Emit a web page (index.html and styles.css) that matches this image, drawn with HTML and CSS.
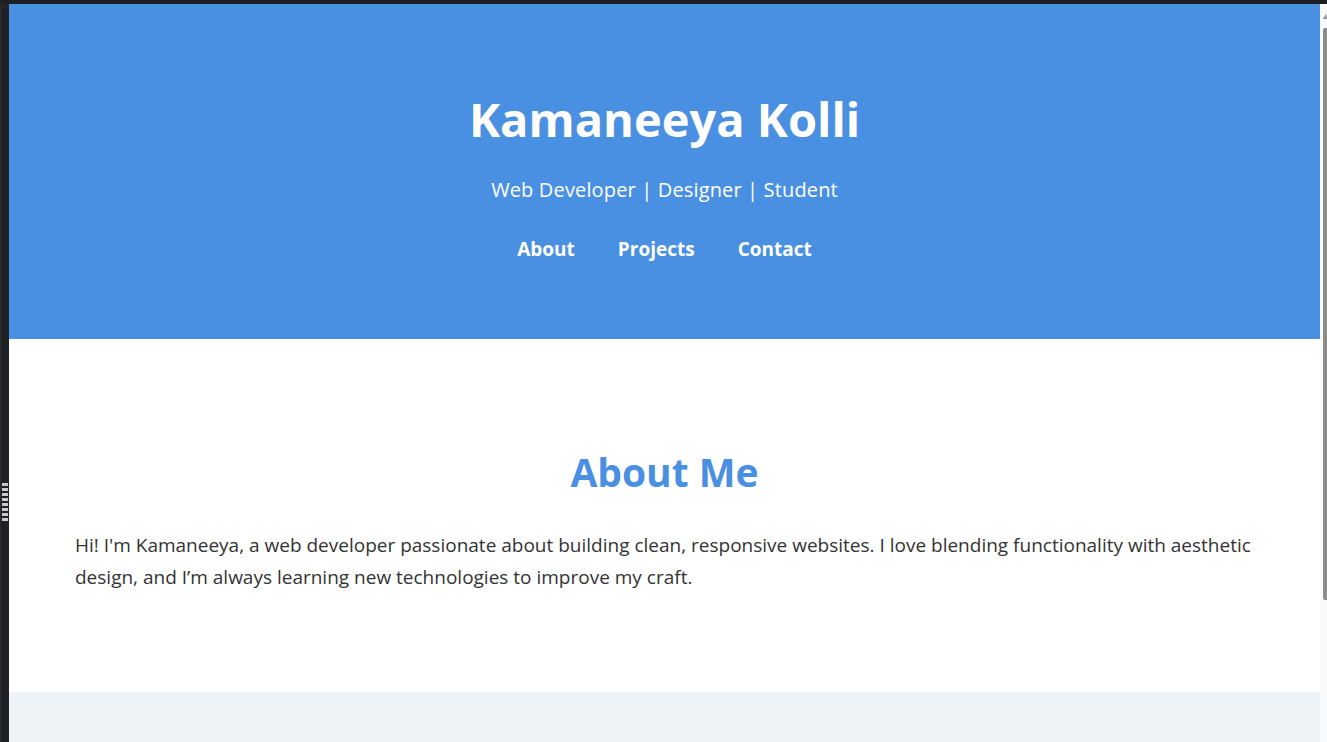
FILE: index.html
```html
<!DOCTYPE html>
<html lang="en">
<head>
<meta charset="utf-8">
<title>Kamaneeya Kolli</title>
<link rel="stylesheet" href="styles.css">
</head>
<body>
<div class="frame">
  <div class="frame-top"></div>
  <div class="frame-row">
    <div class="frame-left"><div class="grip"></div></div>
    <div class="page">
      <header class="hero">
        <h1 class="hero-title">Kamaneeya Kolli</h1>
        <p class="hero-sub">Web Developer | Designer | Student</p>
        <nav class="hero-nav">
          <a href="#about">About</a>
          <a href="#projects">Projects</a>
          <a href="#contact">Contact</a>
        </nav>
      </header>
      <section class="about" id="about">
        <h2 class="section-title">About Me</h2>
        <p class="about-text">Hi! I'm Kamaneeya, a web developer passionate about building clean, responsive websites. I love blending functionality with aesthetic design, and I’m always learning new technologies to improve my craft.</p>
      </section>
      <section class="projects" id="projects"></section>
    </div>
    <div class="scrollbar">
      <div class="scroll-arrow"></div>
      <div class="scroll-thumb"></div>
    </div>
  </div>
</div>
</body>
</html>
```

FILE: styles.css
```css
html, body {
  margin: 0;
  padding: 0;
  height: 100%;
  overflow: hidden;
}
body {
  background: #1f2024;
  font-family: "Open Sans", "Noto Sans", sans-serif;
  color: #333;
}
.frame {
  display: flex;
  flex-direction: column;
  height: 742px;
}
.frame-top {
  height: 4px;
  background: #1e1f22;
  flex: none;
}
.frame-row {
  flex: 1;
  display: flex;
  min-height: 0;
}
.frame-left {
  width: 9px;
  flex: none;
  background: #202227;
  border-left: 1px solid #2b2d31;
  box-sizing: border-box;
  display: flex;
  flex-direction: column;
}
.grip {
  margin-top: 479px;
  margin-left: 1px;
  width: 6px;
  height: 40px;
  background: repeating-linear-gradient(to bottom, #c9cacc 0 3px, #202227 3px 5px);
  -webkit-mask: repeating-linear-gradient(to right, #000 0 3px, transparent 3px 3.4px);
}
.page {
  flex: 1;
  min-width: 0;
  background: #fff;
  overflow: hidden;
}
.scrollbar {
  width: 7px;
  flex: none;
  background: #fafafa;
  display: flex;
  flex-direction: column;
  align-items: flex-end;
}
.scroll-arrow {
  margin-top: 10px;
  width: 0;
  height: 0;
  border-left: 3px solid transparent;
  border-right: 1px solid transparent;
  border-bottom: 5px solid #8a8a8a;
}
.scroll-thumb {
  margin-top: 9px;
  width: 4px;
  height: 572px;
  background: #8c8c8c;
  border-radius: 2px 0 0 2px;
}

.hero {
  background: #4a90e2;
  color: #fff;
  text-align: center;
  padding: 87px 20px 78px;
}
.hero-title {
  margin: 0;
  font-size: 47px;
  line-height: 56px;
  font-weight: 700;
}
.hero-sub {
  margin: 29px 0 0;
  font-size: 20px;
  line-height: 28px;
  letter-spacing: 0.15px;
}
.hero-nav {
  margin-top: 33px;
  display: flex;
  justify-content: center;
  gap: 43px;
  font-size: 19px;
  line-height: 24px;
}
.hero-nav a {
  color: #fff;
  text-decoration: none;
  font-weight: 700;
}

.about {
  padding: 109px 66px 99px;
}
.section-title {
  margin: 0;
  text-align: center;
  color: #4a90e2;
  font-size: 39px;
  line-height: 48px;
  font-weight: 700;
}
.about-text {
  margin: 33px 0 0;
  font-size: 19px;
  line-height: 32px;
  color: #333;
}
.projects {
  height: 200px;
  background: #edf2f7;
}
```
